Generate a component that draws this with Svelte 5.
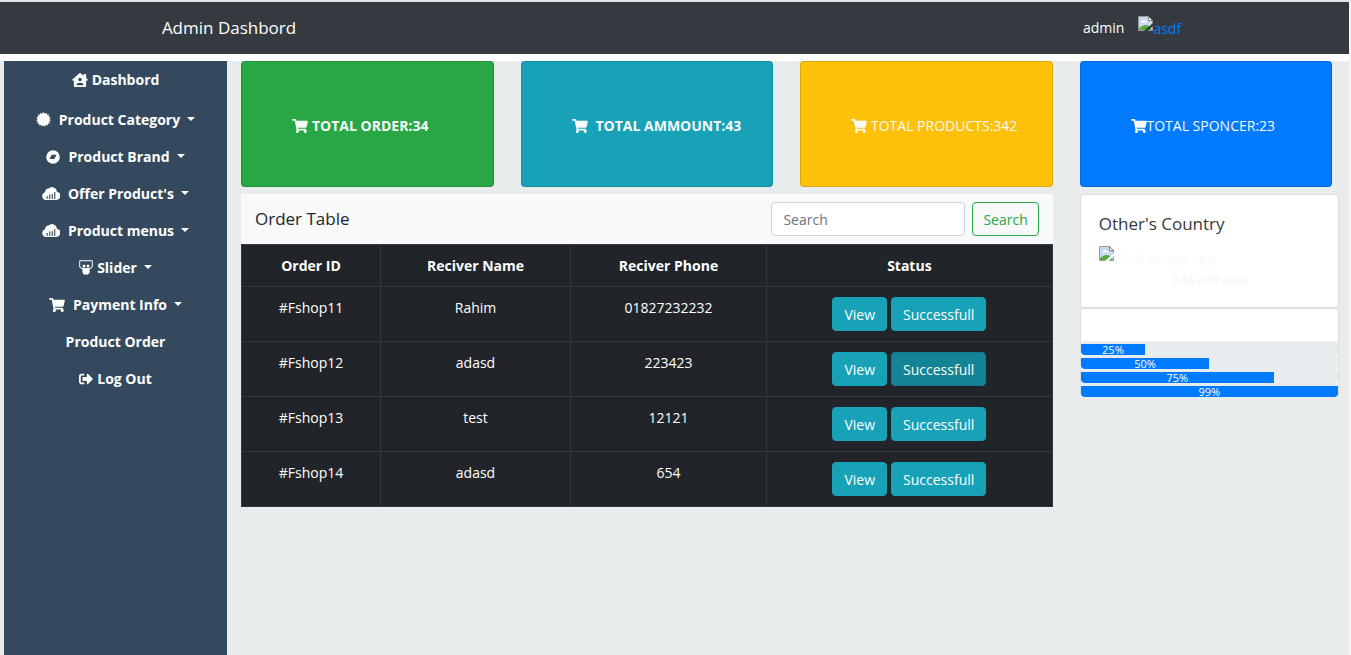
<script>
  const menu = [
    { label: 'Dashbord', icon: 'home' },
    { label: 'Product Category', icon: 'certificate', wide: true, caret: true },
    { label: 'Product Brand', icon: 'brand', wide: true, caret: true },
    { label: "Offer Product's", icon: 'cloud', wide: true, caret: true },
    { label: 'Product menus', icon: 'cloud', wide: true, caret: true },
    { label: 'Slider', icon: 'slider', caret: true },
    { label: 'Payment Info', icon: 'cart', wide: true, caret: true },
    { label: 'Product Order' },
    { label: 'Log Out', icon: 'logout' }
  ];

  const totals = [
    { label: 'TOTAL ORDER:34', tone: 'green', bold: true, gap: 'small' },
    { label: 'TOTAL AMMOUNT:43', tone: 'teal', bold: true, gap: 'wide' },
    { label: 'TOTAL PRODUCTS:342', tone: 'yellow', gap: 'small' },
    { label: 'TOTAL SPONCER:23', tone: 'blue', gap: 'none' }
  ];

  const orders = [
    { id: '#Fshop11', name: 'Rahim', phone: '01827232232' },
    { id: '#Fshop12', name: 'adasd', phone: '223423', active: true },
    { id: '#Fshop13', name: 'test', phone: '12121' },
    { id: '#Fshop14', name: 'adasd', phone: '654' }
  ];

  const progress = [
    { label: '25%', width: 25 },
    { label: '50%', width: 50 },
    { label: '75%', width: 75 },
    { label: '99%', width: 100 }
  ];

  // Fifteen-pointed badge outline
  const badge = Array.from({ length: 30 }, (_, i) => {
    const r = i % 2 ? 200 : 256;
    const a = (i * Math.PI) / 15;
    return `${Math.round(256 + r * Math.sin(a))},${Math.round(256 - r * Math.cos(a))}`;
  }).join(' ');

  let query = $state('');
</script>

{#snippet icon(name)}
  {#if name === 'cart'}
    <svg class="icon" width="16" height="14" viewBox="0 0 576 512" aria-hidden="true"><path d="M528.12 301.319l47.273-208C578.806 78.301 567.391 64 551.99 64H159.208l-9.166-44.81C147.758 8.021 137.93 0 126.529 0H24C10.745 0 0 10.745 0 24v16c0 13.255 10.745 24 24 24h69.883l70.248 343.435C147.325 417.1 136 435.222 136 456c0 30.928 25.072 56 56 56s56-25.072 56-56c0-15.674-6.447-29.835-16.824-40h209.647C430.447 426.165 424 440.326 424 456c0 30.928 25.072 56 56 56s56-25.072 56-56c0-22.172-12.888-41.332-31.579-50.405l5.517-24.276c3.413-15.018-8.002-29.319-23.403-29.319H218.117l-6.545-32h293.145c11.206 0 20.92-7.754 23.403-18.681z" /></svg>
  {:else if name === 'home'}
    <svg class="icon" width="16" height="14" viewBox="0 0 576 512" aria-hidden="true"><path fill-rule="evenodd" d="M570 237 512 185V48c0-9-7-16-16-16h-64c-9 0-16 7-16 16v51L309 8c-12-11-30-11-42 0L6 237c-7 6-8 16-2 23l22 24c6 6 16 7 22 1l16-14v209c0 18 14 32 32 32h384c18 0 32-14 32-32V271l16 14c6 6 16 5 22-1l22-24c6-7 5-17-2-23zM288 176a64 64 0 1 1 0 128 64 64 0 0 1 0-128zM400 448H176c-9 0-17-8-15-16 7-46 47-80 95-80h64c48 0 88 34 95 80 2 8-6 16-15 16z" /></svg>
  {:else if name === 'certificate'}
    <svg class="icon" width="15" height="15" viewBox="0 0 512 512" aria-hidden="true"><polygon points={badge} /></svg>
  {:else if name === 'brand'}
    <svg class="icon" width="14" height="14" viewBox="0 0 512 512" aria-hidden="true"><path fill-rule="evenodd" d="M256 8a248 248 0 1 0 0 496 248 248 0 0 0 0-496zM304 328H125l84-152h179z" /></svg>
  {:else if name === 'cloud'}
    <svg class="icon" width="18" height="14" viewBox="0 0 18 14" aria-hidden="true"><path fill-rule="evenodd" d="M4 13a4 4 0 0 1-1-7.8A4 4 0 0 1 6.500 1.600 5 5 0 0 1 15 4.700 4.200 4.200 0 0 1 14 13zM4.600 9v3h1.100V9zm2.600-1.500V12h1.100V7.500zm2.500-.5v5h1.100V7zm2.500-2v7h1.100V5z" /></svg>
  {:else if name === 'slider'}
    <svg class="icon" width="14" height="15" viewBox="0 0 14 15" aria-hidden="true"><path fill-rule="evenodd" d="M1.500.2h11c.8 0 1.300.5 1.300 1.300V7l-1.800 1.500c-.8.400-1.200.5-1.800.6.500 2.900-.2 5.300-2 5.300-.7 0-1-.5-1.200-1-.2.5-.5 1-1.200 1-1.800 0-2.500-2.400-2-5.300-.6-.1-1-.2-1.800-.6L.2 7V1.500C.2.7.7.2 1.500.2zM1.200 1.200v5.600l1.600.9c1 .4 1.700.3 2.600.3h3.200c.9 0 1.600.1 2.600-.3l1.600-.9V1.200z" /><circle cx="5" cy="6" r="1.500" /><circle cx="9" cy="6" r="1.500" /><path d="M3.500 9h7v3.500l-1.500 2H7.500L7 13.500l-.5 1H5l-1.500-2z" /></svg>
  {:else if name === 'logout'}
    <svg class="icon" width="14" height="14" viewBox="0 0 512 512" aria-hidden="true"><path d="M497 273L329 441c-15 15-41 4.500-41-17v-96H152c-13.300 0-24-10.700-24-24v-96c0-13.300 10.700-24 24-24h136V88c0-21.400 25.900-32 41-17l168 168c9.300 9.400 9.300 24.600 0 34zM192 436v-40c0-6.600-5.400-12-12-12H96c-17.700 0-32-14.300-32-32V160c0-17.700 14.300-32 32-32h84c6.600 0 12-5.400 12-12V76c0-6.600-5.400-12-12-12H96c-53 0-96 43-96 96v192c0 53 43 96 96 96h84c6.600 0 12-5.400 12-12z" /></svg>
  {/if}
{/snippet}

{#snippet missingImage()}
  <svg class="missing" width="15" height="16" viewBox="0 0 15 16" aria-hidden="true">
    <path d="M.5.5h10l4 4v10H.5z" fill="#c6d8f3" stroke="#9a9a9a" />
    <path d="M3 6.500c0-1.500 1.300-1.500 1.700-1.500C5 3.500 7.500 3.500 8 5c1.200 0 1.500.7 1.500 1.500z" fill="#fff" />
    <path d="M1 14v-1.500C4 9 8 8 11 10l3 4z" fill="#55ac3c" />
    <path d="M10.500.5v4h4z" fill="#fff" stroke="#858585" />
    <path d="M15 7v3l-5.500 5H6z" fill="var(--cut)" />
  </svg>
{/snippet}

<div class="page">
  <header>
    <div class="bar">
      <a class="title" href="#home">Admin Dashbord</a>
      <div class="user">
        <span>admin</span>
        <a class="avatar" href="#profile">{@render missingImage()}<span>asdf</span></a>
      </div>
    </div>
  </header>

  <div class="layout">
    <nav class="sidebar">
      <ul>
        {#each menu as item}
          <li>
            <a href="#menu">
              {#if item.icon}<span class="lead" class:wide={item.wide}>{@render icon(item.icon)}</span>{/if}
              {item.label}
              {#if item.caret}<span class="caret"></span>{/if}
            </a>
          </li>
        {/each}
      </ul>
    </nav>

    <main>
      <section class="totals">
        {#each totals as card}
          <div class="total {card.tone} gap-{card.gap}" class:bold={card.bold}>
            {@render icon('cart')}<span>{card.label}</span>
          </div>
        {/each}
      </section>

      <div class="columns">
        <section class="orders">
          <div class="toolbar">
            <h2>Order Table</h2>
            <form onsubmit={(e) => e.preventDefault()}>
              <input type="search" placeholder="Search" aria-label="Search" bind:value={query} />
              <button class="outline" type="submit">Search</button>
            </form>
          </div>
          <table>
            <colgroup><col class="c-id" /><col class="c-name" /><col class="c-phone" /><col /></colgroup>
            <thead>
              <tr><th>Order ID</th><th>Reciver Name</th><th>Reciver Phone</th><th>Status</th></tr>
            </thead>
            <tbody>
              {#each orders as order}
                <tr>
                  <td>{order.id}</td>
                  <td>{order.name}</td>
                  <td>{order.phone}</td>
                  <td>
                    <div class="actions">
                      <button type="button">View</button>
                      <button type="button" class:active={order.active}>Successfull</button>
                    </div>
                  </td>
                </tr>
              {/each}
            </tbody>
          </table>
        </section>

        <aside>
          <section class="card country">
            <h3>Other's Country</h3>
            <div class="picture">{@render missingImage()}<span>Card image cap</span></div>
            <p>34534Taka</p>
          </section>
          <section class="card bars">
            {#each progress as bar}
              <div class="track">
                <div class="fill" style="width: {bar.width}%">{bar.label}</div>
              </div>
            {/each}
          </section>
        </aside>
      </div>
    </main>
  </div>
</div>

<style>
  :global(body) {
    margin: 0;
    background: #fff;
  }
  .page,
  .page * {
    box-sizing: border-box;
  }
  .page {
    display: flex;
    flex-direction: column;
    min-height: 100vh;
    border-top: 2px solid #dfe3e6;
    border-right: 2px solid #f3f5f5;
    font: 14px/21px "Segoe UI", "Open Sans", "Noto Sans", sans-serif;
    color: #212529;
  }
  a {
    color: inherit;
    text-decoration: none;
  }
  ul, h2, h3, p {
    margin: 0;
    padding: 0;
  }
  .icon,
  .missing {
    flex: none;
  }
  .icon {
    fill: currentColor;
  }
  header {
    background: #343a40;
    color: #fff;
  }
  .bar {
    display: flex;
    align-items: center;
    justify-content: space-between;
    width: 76%;
    height: 52px;
    margin: 0 auto;
    padding-right: 6px;
  }
  .title {
    font-size: 17px;
    line-height: 28px;
  }
  .user {
    display: flex;
    align-items: center;
    gap: 14px;
    padding-bottom: 1px;
  }
  .avatar,
  .picture {
    display: flex;
    align-items: flex-start;
  }
  .avatar span,
  .picture span {
    padding-top: 2px;
  }
  .avatar {
    --cut: #343a40;
    color: #007bff;
  }
  .layout {
    flex: 1;
    display: grid;
    grid-template-columns: 223px minmax(0, 1fr);
    margin-top: 7px;
    padding-left: 4px;
    background: #e8ecec;
  }
  .sidebar {
    background: #34495e;
    color: #fff;
    font-weight: 700;
  }
  ul {
    list-style: none;
  }
  li a {
    display: flex;
    align-items: center;
    justify-content: center;
    height: 37px;
  }
  li:first-child {
    padding-bottom: 3px;
  }
  .lead {
    display: flex;
    margin-right: 4px;
  }
  .lead.wide {
    margin-right: 8px;
  }
  .caret {
    margin: 0 0 1px 7px;
    border: 4px solid transparent;
    border-top-color: currentColor;
    border-bottom: 0;
  }
  main {
    padding: 0 10px 0 14px;
  }
  .totals {
    display: grid;
    grid-template-columns: repeat(4, minmax(0, 1fr));
    gap: 27px;
    margin-right: 7px;
  }
  .total {
    display: flex;
    align-items: center;
    height: 126px;
    padding: 3px 0 0 50px;
    border: 1px solid rgba(0, 0, 0, 0.125);
    border-radius: 4px;
    color: #f8f9fa;
    white-space: nowrap;
  }
  .bold {
    font-weight: 700;
  }
  .gap-small {
    gap: 4px;
  }
  .gap-wide {
    gap: 8px;
  }
  .green {
    background: #28a745;
  }
  .teal {
    background: #17a2b8;
  }
  .yellow {
    background: #ffc107;
  }
  .blue {
    background: #007bff;
  }
  .columns {
    display: grid;
    grid-template-columns: minmax(0, 811fr) minmax(0, 259fr);
    align-items: start;
    gap: 27px;
    margin-top: 7px;
  }
  .toolbar {
    display: flex;
    align-items: center;
    justify-content: space-between;
    padding: 8px 14px;
    background: #f8f9fa;
  }
  h2 {
    font-size: 17px;
    font-weight: 400;
    line-height: 28px;
  }
  form {
    display: flex;
    gap: 7px;
  }
  input {
    width: 194px;
    height: 34px;
    padding: 0 11px;
    border: 1px solid #ced4da;
    border-radius: 4px;
    background: #fff;
    font: inherit;
    color: #495057;
    appearance: none;
  }
  input::placeholder {
    color: #6c757d;
    opacity: 1;
  }
  button {
    height: 34px;
    padding: 0 11px;
    border: 1px solid #17a2b8;
    border-radius: 4px;
    background: #17a2b8;
    color: #fff;
    font: inherit;
    cursor: pointer;
  }
  button.outline {
    padding: 0 10px;
    border-color: #28a745;
    background: transparent;
    color: #28a745;
  }
  button.active {
    border-color: #117a8b;
    background: #138496;
  }
  table {
    width: 100%;
    table-layout: fixed;
    border-collapse: collapse;
    background: #212529;
    color: #fff;
    text-align: center;
  }
  .c-id {
    width: 139px;
  }
  .c-name {
    width: 190px;
  }
  .c-phone {
    width: 196px;
  }
  th,
  td {
    padding: 10px;
    border: 1px solid #32383e;
    vertical-align: top;
  }
  th {
    font-weight: 700;
  }
  .actions {
    display: flex;
    justify-content: center;
    gap: 4px;
  }
  .card {
    border: 1px solid #dcdfe0;
    border-radius: 4px;
    background: #fff;
  }
  .country {
    --cut: #fff;
    padding: 18px 18px 17px;
    color: #f8f9fa;
  }
  h3 {
    margin-bottom: 11px;
    color: #343a40;
    font-size: 17px;
    font-weight: 500;
    line-height: 22px;
  }
  .country p {
    text-align: center;
    font-weight: 800;
  }
  .bars {
    padding-top: 32px;
    border-bottom: 0;
  }
  .track {
    display: flex;
    align-items: flex-end;
    padding-top: 3px;
    border-radius: 4px;
    background: #e9ecef;
  }
  .fill {
    border-radius: 0 0 0 4px;
    background: #007bff;
    color: #fff;
    font-size: 11px;
    line-height: 11px;
    text-align: center;
  }
  .track:last-child .fill {
    border-radius: 0 0 4px 4px;
  }
</style>
